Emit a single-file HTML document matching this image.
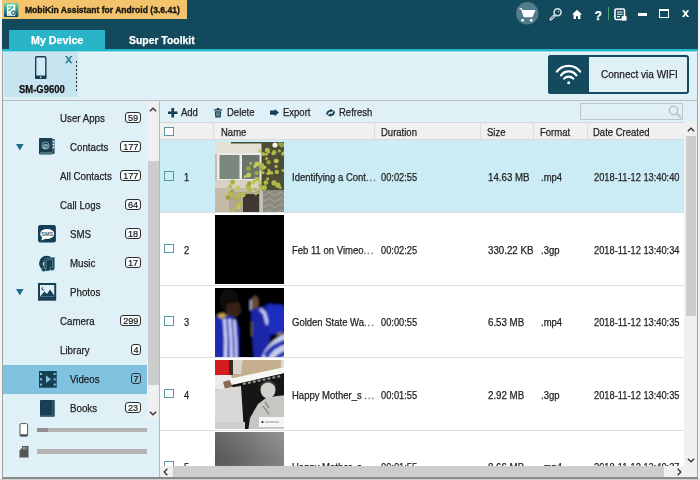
<!DOCTYPE html>
<html><head><meta charset="utf-8">
<style>
*{margin:0;padding:0;box-sizing:border-box}
html,body{width:700px;height:480px;overflow:hidden;background:#f2f2f2;font-family:"Liberation Sans",sans-serif;color:#222;position:relative}
.a{position:absolute}
.tx{position:absolute;white-space:nowrap;line-height:14px;-webkit-text-stroke:.25px currentColor}
svg{position:absolute;overflow:visible}
</style></head><body>
<div class="a" style="left:0;top:0;width:2px;height:480px;background:#f4f4f4"></div>
<div class="a" style="left:2px;top:51px;width:1px;height:428px;background:#a0a0a0"></div>
<div class="a" style="left:697px;top:51px;width:1px;height:428px;background:#a0a0a0"></div>
<div class="a" style="left:698px;top:0;width:2px;height:480px;background:#f4f4f4"></div>
<div class="a" style="left:2px;top:477px;width:696px;height:1.5px;background:#8a8a8a"></div>
<div class="a" style="left:0;top:478.5px;width:700px;height:1.5px;background:#cfcfcf"></div>
<div class="a" style="left:2px;top:0;width:696px;height:49px;background:#12495d"></div>
<div class="a" style="left:2px;top:0;width:185px;height:18.5px;background:#f3c46b"></div>
<svg style="left:4.2px;top:3px" width="14.4" height="14" viewBox="0 0 14.4 14">
  <defs><linearGradient id="ag" x1="0" y1="0" x2="0" y2="1"><stop offset="0" stop-color="#72dcaa"/><stop offset=".55" stop-color="#2a8a8a"/><stop offset="1" stop-color="#0c4560"/></linearGradient></defs>
  <rect x="0" y="0" width="14.4" height="14" rx="1.2" fill="url(#ag)"/>
  <rect x="2.9" y="1.6" width="8.4" height="11.2" fill="#f4fbf8"/>
  <path d="M4 3.2h5.6v1.3L5.6 8.2H4V7l3.6-2.6H4z" fill="#4cc08e"/>
  <circle cx="9.4" cy="9.8" r="2.3" fill="#2d6f78"/><circle cx="9.4" cy="9.8" r="1" fill="#f4fbf8"/>
  <path d="M4 10h2.4M4 11.4h2.4" stroke="#9ad8c0" stroke-width=".7"/>
</svg>
<div class="tx" style="left:25px;top:2.68px;font-size:9.3px;font-weight:bold;color:#141414;transform:scaleX(0.92);transform-origin:0 0;-webkit-text-stroke:.35px #141414;">MobiKin Assistant for Android (3.6.41)</div>
<svg style="left:516px;top:2px" width="23" height="23" viewBox="0 0 23 23">
  <circle cx="11.3" cy="11.3" r="11.2" fill="#527d8b"/>
  <path d="M3.6 6.4l2 .6 2.4 6.8h8.2l2.4-5.2H6.2" fill="none" stroke="#fff" stroke-width="1.3"/>
  <path d="M6.2 9h12.4l-2.4 6.2H8z" fill="#fff"/>
  <circle cx="6.6" cy="18.3" r="1.4" fill="#fff"/><circle cx="15.3" cy="18.3" r="1.4" fill="#fff"/>
</svg>
<svg style="left:546px;top:5px" width="20" height="18" viewBox="0 0 20 18">
  <path d="M8.8 10.3L4.8 14.3" stroke="#d0dde2" stroke-width="2.8" stroke-linecap="round"/>
  <path d="M8.4 10.7L5.2 13.9" stroke="#2f5a6b" stroke-width=".9"/>
  <circle cx="11.6" cy="7.2" r="3.5" fill="#134a5e" stroke="#d6e2e6" stroke-width="1.6"/>
  <path d="M11.6 5.6L13.2 6.2L12.2 7.4z" fill="#b8ccd4"/>
</svg>
<svg style="left:572px;top:9px" width="10" height="10" viewBox="0 0 10 10">
  <path d="M5 .8L0 5.6h1.6V10h2.4V7.2h2V10h2.4V5.6H10z" fill="#fff"/>
</svg>
<div class="tx" style="left:594.5px;top:8.74px;font-size:12px;font-weight:bold;color:#fff;">?</div>
<div class="a" style="left:608px;top:7px;width:1.4px;height:13px;background:#43a876"></div>
<svg style="left:614px;top:8px" width="13" height="13" viewBox="0 0 13 13">
  <rect x="1" y="1" width="9.5" height="10.5" rx="1.2" fill="none" stroke="#fff" stroke-width="1.6"/>
  <path d="M3 4h5.5M3 6.3h5.5M3 8.6h3" stroke="#fff" stroke-width="1.1"/>
  <rect x="7.6" y="8.2" width="5" height="4.4" fill="#fff"/>
</svg>
<div class="a" style="left:638px;top:13px;width:9px;height:3px;background:#fff"></div>
<div class="a" style="left:659px;top:9px;width:10px;height:9px;border:1.2px solid #fff;border-top-width:2.5px"></div>
<svg style="left:682.4px;top:10.3px" width="7.2" height="7.3" viewBox="0 0 7.5 7.2"><path d="M0 0h2.3l1.45 2.1L5.2 0h2.3L4.95 3.6L7.5 7.2H5.2L3.75 5.1L2.3 7.2H0L2.55 3.6z" fill="#fff"/></svg>
<div class="a" style="left:9px;top:30px;width:96px;height:19px;background:#29b4c8"></div>
<div class="tx" style="left:30.7px;top:32.86px;font-size:10.8px;font-weight:bold;color:#fff;transform:scaleX(0.99);transform-origin:0 0;">My Device</div>
<div class="tx" style="left:129.3px;top:32.86px;font-size:10.8px;font-weight:bold;color:#fff;transform:scaleX(0.963);transform-origin:0 0;">Super Toolkit</div>
<div class="a" style="left:2px;top:49px;width:696px;height:2px;background:#1fb9ca"></div>
<div class="a" style="left:2px;top:51px;width:696px;height:1px;background:#8fd8e3"></div>
<div class="a" style="left:3px;top:52px;width:694px;height:48px;background:#e0f0f7"></div>
<div class="a" style="left:3px;top:52px;width:694px;height:1px;background:#f0f9fc"></div>
<div class="a" style="left:4px;top:52px;width:74px;height:45px;background:#c7e4f1"></div>
<svg style="left:34.8px;top:55.7px" width="12" height="23" viewBox="0 0 12 23">
  <rect x=".7" y=".7" width="10.1" height="21.5" rx="1" fill="#d2eaf4" stroke="#173f53" stroke-width="1.4"/>
  <rect x="0" y="19.6" width="11.5" height="3.3" rx=".8" fill="#173f53"/>
  <circle cx="5.75" cy="21.2" r=".8" fill="#fff"/>
</svg>
<svg style="left:65px;top:55.7px" width="7.5" height="7.2" viewBox="0 0 7.5 7.2">
  <path d="M0 0h2.1l1.65 2.3L5.4 0h2.1L4.8 3.6L7.5 7.2H5.4L3.75 4.9L2.1 7.2H0L2.7 3.6z" fill="#2a8990"/>
</svg>
<div class="a" style="left:76px;top:61px;width:1px;height:32px;background:repeating-linear-gradient(to bottom,#333 0 2px,transparent 2px 4px)"></div>
<div class="tx" style="left:19.2px;top:83.17px;font-size:10.2px;font-weight:bold;color:#111;transform:scaleX(0.93);transform-origin:0 0;">SM-G9600</div>
<div class="a" style="left:548px;top:55px;width:141px;height:39px;border:2px solid #134a5e;border-radius:3px;background:#e0f0f7"></div>
<div class="a" style="left:548px;top:55px;width:41px;height:39px;background:#134a5e;border-radius:3px 0 0 3px"></div>
<svg style="left:555px;top:64px" width="27" height="21" viewBox="0 0 27 21">
  <path d="M1.8 7.6A14.9 14.9 0 0 1 25.2 7.6" fill="none" stroke="#fff" stroke-width="2.2" stroke-linecap="round"/>
  <path d="M6 11.3A9.4 9.4 0 0 1 21.4 11.3" fill="none" stroke="#fff" stroke-width="2.2" stroke-linecap="round"/>
  <path d="M9.2 14.6A6.3 6.3 0 0 1 18.2 14.6" fill="none" stroke="#fff" stroke-width="2.2" stroke-linecap="round"/>
  <circle cx="13.7" cy="18.8" r="1.5" fill="#fff"/>
</svg>
<div class="tx" style="left:601.3px;top:66.79px;font-size:11px;font-weight:normal;color:#222;transform:scaleX(0.91);transform-origin:0 0;">Connect via WIFI</div>
<div class="a" style="left:3px;top:100px;width:694px;height:1px;background:#b9bdbf"></div>
<div class="a" style="left:3px;top:101px;width:156px;height:376px;background:#e0f0f7"></div>
<div class="a" style="left:3px;top:365px;width:144px;height:29px;background:#7fc3e1"></div>
<div class="tx" style="left:59.9px;top:111.06px;font-size:10.8px;font-weight:normal;color:#222;transform:scaleX(0.9);transform-origin:0 0;">User Apps</div>
<div class="a" style="left:125px;top:111.9px;width:16px;height:11.6px;border:1px solid #2e2e2e;border-radius:3px;background:#f8fcfe"></div>
<div class="tx" style="left:125px;top:111.40px;width:16px;text-align:center;font-size:9.6px;color:#1a1a1a;-webkit-text-stroke:.2px currentColor;transform:scaleX(.95);transform-origin:50% 0">59</div>
<div class="tx" style="left:70.0px;top:140.06px;font-size:10.8px;font-weight:normal;color:#222;transform:scaleX(0.9);transform-origin:0 0;">Contacts</div>
<div class="a" style="left:119.5px;top:140.9px;width:21.5px;height:11.6px;border:1px solid #2e2e2e;border-radius:3px;background:#f8fcfe"></div>
<div class="tx" style="left:119.5px;top:140.40px;width:21.5px;text-align:center;font-size:9.6px;color:#1a1a1a;-webkit-text-stroke:.2px currentColor;transform:scaleX(.95);transform-origin:50% 0">177</div>
<svg style="left:39px;top:138.0px" width="16" height="17" viewBox="0 0 16 17">
<rect x="0" y="0" width="13.5" height="16.5" rx="1" fill="#173f53"/><rect x="13.5" y="1" width="2" height="15" fill="#173f53"/>
<circle cx="14.5" cy="3.5" r=".9" fill="#e0f0f7"/><circle cx="14.5" cy="6.5" r=".9" fill="#e0f0f7"/><circle cx="14.5" cy="9.5" r=".9" fill="#e0f0f7"/>
<circle cx="6.6" cy="7.6" r="3.6" fill="none" stroke="#9fb8c2" stroke-width=".8"/><text x="6.6" y="9.8" font-size="6.2" font-family="Liberation Sans" font-weight="bold" text-anchor="middle" fill="#d8e6ec">@</text>
<path d="M1 15h12" stroke="#cfe3ea" stroke-width=".6"/></svg>
<svg style="left:16px;top:143.7px" width="8" height="7" viewBox="0 0 8 7"><path d="M0 0h7.6L3.8 6.4z" fill="#1f6d8c"/></svg>
<div class="tx" style="left:59.9px;top:169.06px;font-size:10.8px;font-weight:normal;color:#222;transform:scaleX(0.9);transform-origin:0 0;">All Contacts</div>
<div class="a" style="left:119.5px;top:169.9px;width:21.5px;height:11.6px;border:1px solid #2e2e2e;border-radius:3px;background:#f8fcfe"></div>
<div class="tx" style="left:119.5px;top:169.40px;width:21.5px;text-align:center;font-size:9.6px;color:#1a1a1a;-webkit-text-stroke:.2px currentColor;transform:scaleX(.95);transform-origin:50% 0">177</div>
<div class="tx" style="left:59.9px;top:198.06px;font-size:10.8px;font-weight:normal;color:#222;transform:scaleX(0.9);transform-origin:0 0;">Call Logs</div>
<div class="a" style="left:125px;top:198.9px;width:16px;height:11.6px;border:1px solid #2e2e2e;border-radius:3px;background:#f8fcfe"></div>
<div class="tx" style="left:125px;top:198.40px;width:16px;text-align:center;font-size:9.6px;color:#1a1a1a;-webkit-text-stroke:.2px currentColor;transform:scaleX(.95);transform-origin:50% 0">64</div>
<div class="tx" style="left:70.0px;top:227.06px;font-size:10.8px;font-weight:normal;color:#222;transform:scaleX(0.9);transform-origin:0 0;">SMS</div>
<div class="a" style="left:125px;top:227.9px;width:16px;height:11.6px;border:1px solid #2e2e2e;border-radius:3px;background:#f8fcfe"></div>
<div class="tx" style="left:125px;top:227.40px;width:16px;text-align:center;font-size:9.6px;color:#1a1a1a;-webkit-text-stroke:.2px currentColor;transform:scaleX(.95);transform-origin:50% 0">18</div>
<svg style="left:38.3px;top:225.10000000000002px" width="18" height="17.5" viewBox="0 0 18 17.5">
<rect x="0" y="0" width="17.9" height="17.4" rx="2.2" fill="#173f53"/>
<ellipse cx="9.2" cy="8.9" rx="7" ry="5" fill="#fff"/><path d="M4.4 12L3.2 15.6L8.4 13.4z" fill="#fff"/>
<text x="9.2" y="10.9" font-size="5.4" font-family="Liberation Sans" font-weight="bold" text-anchor="middle" fill="#4a5a62">SMS</text></svg>
<div class="tx" style="left:70.0px;top:256.06px;font-size:10.8px;font-weight:normal;color:#222;transform:scaleX(0.9);transform-origin:0 0;">Music</div>
<div class="a" style="left:125px;top:256.9px;width:16px;height:11.6px;border:1px solid #2e2e2e;border-radius:3px;background:#f8fcfe"></div>
<div class="tx" style="left:125px;top:256.40px;width:16px;text-align:center;font-size:9.6px;color:#1a1a1a;-webkit-text-stroke:.2px currentColor;transform:scaleX(.95);transform-origin:50% 0">17</div>
<svg style="left:38.6px;top:254.60000000000002px" width="16" height="17" viewBox="0 0 16 17">
<circle cx="7.6" cy="8.4" r="7.6" fill="#173f53"/>
<path d="M6.2 4.6L14.6 3.4V13.2M6.2 4.6V14.2" fill="none" stroke="#6f9aa8" stroke-width="2.4"/>
<path d="M6.2 4.6L14.6 3.4V13.2M6.2 4.6V14.2" fill="none" stroke="#173f53" stroke-width="1.1"/>
<ellipse cx="4.8" cy="14.6" rx="2.2" ry="1.8" fill="#173f53" stroke="#6f9aa8" stroke-width=".7"/>
<ellipse cx="13.2" cy="13.6" rx="2.2" ry="1.8" fill="#173f53" stroke="#6f9aa8" stroke-width=".7"/>
<path d="M4.6 7.2Q3.6 9 4.8 10.6" fill="none" stroke="#e8f4f8" stroke-width="1"/>
</svg>
<div class="tx" style="left:70.0px;top:285.06px;font-size:10.8px;font-weight:normal;color:#222;transform:scaleX(0.9);transform-origin:0 0;">Photos</div>
<svg style="left:38px;top:282.90000000000003px" width="18.5" height="18" viewBox="0 0 18.5 18">
<rect x="0" y="0" width="18.2" height="17.7" fill="#173f53"/><rect x="2" y="2" width="14.2" height="11.5" fill="#e0f0f7"/>
<path d="M2 13.5L6.5 8.5L9 11L12 6.5L16.2 12.5V13.5z" fill="#173f53"/>
<path d="M5.3 3.8a1.8 1.8 0 1 0 1.6 2.7a1.5 1.5 0 1 1 -1.6 -2.7z" fill="#173f53"/></svg>
<svg style="left:16px;top:288.7px" width="8" height="7" viewBox="0 0 8 7"><path d="M0 0h7.6L3.8 6.4z" fill="#1f6d8c"/></svg>
<div class="tx" style="left:59.9px;top:314.06px;font-size:10.8px;font-weight:normal;color:#222;transform:scaleX(0.9);transform-origin:0 0;">Camera</div>
<div class="a" style="left:119.5px;top:314.9px;width:21.5px;height:11.6px;border:1px solid #2e2e2e;border-radius:3px;background:#f8fcfe"></div>
<div class="tx" style="left:119.5px;top:314.40px;width:21.5px;text-align:center;font-size:9.6px;color:#1a1a1a;-webkit-text-stroke:.2px currentColor;transform:scaleX(.95);transform-origin:50% 0">299</div>
<div class="tx" style="left:59.9px;top:343.06px;font-size:10.8px;font-weight:normal;color:#222;transform:scaleX(0.9);transform-origin:0 0;">Library</div>
<div class="a" style="left:131px;top:343.9px;width:10px;height:11.6px;border:1px solid #2e2e2e;border-radius:3px;background:#f8fcfe"></div>
<div class="tx" style="left:131px;top:343.40px;width:10px;text-align:center;font-size:9.6px;color:#1a1a1a;-webkit-text-stroke:.2px currentColor;transform:scaleX(.95);transform-origin:50% 0">4</div>
<div class="tx" style="left:70.0px;top:372.06px;font-size:10.8px;font-weight:normal;color:#222;transform:scaleX(0.9);transform-origin:0 0;">Videos</div>
<div class="a" style="left:131px;top:372.9px;width:10px;height:11.6px;border:1px solid #2e2e2e;border-radius:3px;background:transparent"></div>
<div class="tx" style="left:131px;top:372.40px;width:10px;text-align:center;font-size:9.6px;color:#1a1a1a;-webkit-text-stroke:.2px currentColor;transform:scaleX(.95);transform-origin:50% 0">7</div>
<svg style="left:38.5px;top:371.0px" width="18" height="17" viewBox="0 0 18 17">
<rect x="0" y="0" width="17.7" height="16.7" fill="#173f53"/>
<rect x="1" y="2" width="2" height="2" fill="#80c3e0"/><rect x="1" y="7.3" width="2" height="2" fill="#80c3e0"/><rect x="1" y="12.6" width="2" height="2" fill="#80c3e0"/>
<rect x="14.7" y="2" width="2" height="2" fill="#80c3e0"/><rect x="14.7" y="7.3" width="2" height="2" fill="#80c3e0"/><rect x="14.7" y="12.6" width="2" height="2" fill="#80c3e0"/>
<path d="M7 4.5L12 8.3L7 12z" fill="#80c3e0"/></svg>
<div class="tx" style="left:70.0px;top:401.06px;font-size:10.8px;font-weight:normal;color:#222;transform:scaleX(0.9);transform-origin:0 0;">Books</div>
<div class="a" style="left:125px;top:401.9px;width:16px;height:11.6px;border:1px solid #2e2e2e;border-radius:3px;background:#f8fcfe"></div>
<div class="tx" style="left:125px;top:401.40px;width:16px;text-align:center;font-size:9.6px;color:#1a1a1a;-webkit-text-stroke:.2px currentColor;transform:scaleX(.95);transform-origin:50% 0">23</div>
<svg style="left:39.7px;top:399.7px" width="15" height="17" viewBox="0 0 15 17">
<rect x="0" y="0" width="14.7" height="16.7" rx=".8" fill="#173f53"/><path d="M12.8 .5v15.5" stroke="#5f8a9a" stroke-width=".6"/><path d="M.5 15.8h12.3" stroke="#5f8a9a" stroke-width=".6"/></svg>
<div class="a" style="left:147px;top:101px;width:12px;height:318px;background:#f0f0f0"></div>
<div class="a" style="left:147.5px;top:161px;width:11px;height:224px;background:#cdcdcd"></div>
<svg style="left:149px;top:107px" width="8" height="5" viewBox="0 0 8 5"><path d="M.8 4.3L4 1.2L7.2 4.3" fill="none" stroke="#333" stroke-width="1.3"/></svg>
<svg style="left:149px;top:411px" width="8" height="5" viewBox="0 0 8 5"><path d="M.8 .7L4 3.8L7.2 .7" fill="none" stroke="#333" stroke-width="1.3"/></svg>
<svg style="left:19px;top:422.5px" width="10" height="14" viewBox="0 0 10 14"><rect x="1" y=".6" width="7.6" height="12.6" rx="1.2" fill="#fff" stroke="#555" stroke-width="1"/><rect x="1" y="11.2" width="7.6" height="2" fill="#555"/></svg>
<div class="a" style="left:37px;top:428px;width:110px;height:4px;background:#b3b3b3"></div>
<div class="a" style="left:37px;top:428px;width:11px;height:4px;background:#8f8f8f"></div>
<svg style="left:19px;top:446px" width="10" height="12" viewBox="0 0 10 12"><path d="M3 0h6.5v11.5H.5V4.5L3 2z" fill="#555"/><path d="M4 1h.6v2.5H4zM5.5 1h.6v2.5h-.6zM7 1h.6v2.5H7z" fill="#ddd"/></svg>
<div class="a" style="left:37px;top:449px;width:110px;height:5px;background:#b3b3b3"></div>
<div class="a" style="left:159px;top:101px;width:1px;height:376px;background:#b8b8b8"></div>
<div class="a" style="left:160px;top:101px;width:537px;height:21px;background:#e0f0f7"></div>
<svg style="left:168px;top:108px" width="9.5" height="9.5" viewBox="0 0 9.5 9.5"><path d="M3.4 0h2.7v3.4h3.4v2.7H6.1v3.4H3.4V6.1H0V3.4h3.4z" fill="#173f53"/></svg>
<div class="tx" style="left:181.4px;top:105.26px;font-size:10.8px;font-weight:normal;color:#222;transform:scaleX(0.88);transform-origin:0 0;">Add</div>
<svg style="left:214px;top:108px" width="8" height="9.5" viewBox="0 0 8 9.5"><path d="M0 1.2h8v1.4H0zM2.8 0h2.4v1.2H2.8zM.8 3.2h6.4l-.5 6.3H1.3z" fill="#173f53"/><path d="M2.8 4.3v4M4 4.3v4M5.2 4.3v4" stroke="#e0f0f7" stroke-width=".5"/></svg>
<div class="tx" style="left:227px;top:105.26px;font-size:10.8px;font-weight:normal;color:#222;transform:scaleX(0.88);transform-origin:0 0;">Delete</div>
<svg style="left:269.7px;top:109.3px" width="9" height="7.2" viewBox="0 0 9 7.2"><path d="M0 1.4h4.6V0L9 3.6L4.6 7.2V5.8H0z" fill="#173f53"/></svg>
<div class="tx" style="left:283px;top:105.26px;font-size:10.8px;font-weight:normal;color:#222;transform:scaleX(0.88);transform-origin:0 0;">Export</div>
<svg style="left:326.3px;top:109.3px" width="9.2" height="7.8" viewBox="0 0 9.2 7.8"><path d="M1.2 5.6Q1 2 5 1.6" fill="none" stroke="#173f53" stroke-width="1.9"/><path d="M4.4 0L7.6 1.6L4.6 3.6z" fill="#173f53"/><path d="M8 2.2Q8.2 5.8 4.2 6.2" fill="none" stroke="#173f53" stroke-width="1.9"/><path d="M4.8 7.8L1.6 6.2L4.6 4.2z" fill="#173f53"/></svg>
<div class="tx" style="left:339.3px;top:105.26px;font-size:10.8px;font-weight:normal;color:#222;transform:scaleX(0.88);transform-origin:0 0;">Refresh</div>
<div class="a" style="left:580px;top:103px;width:103px;height:16.5px;border:1.5px solid #bcc6cb;background:#e0f0f7"></div>
<svg style="left:668px;top:104.5px" width="14" height="13" viewBox="0 0 14 13"><circle cx="5.5" cy="5.5" r="4.2" fill="none" stroke="#c3c3c3" stroke-width="1.6"/><path d="M8.6 8.6L12.5 12.2" stroke="#c3c3c3" stroke-width="2.2" stroke-linecap="round"/></svg>
<div class="a" style="left:160px;top:122px;width:524px;height:344px;background:#fff;overflow:hidden"><div class="a" style="left:0;top:0;width:524px;height:18px;background:#f0f0f0;border-bottom:1px solid #dadada;border-top:1px solid #d4d8da"></div>
<div class="a" style="left:53px;top:0;width:1px;height:18px;background:#dcdcdc"></div>
<div class="a" style="left:214px;top:0;width:1px;height:18px;background:#dcdcdc"></div>
<div class="a" style="left:320px;top:0;width:1px;height:18px;background:#dcdcdc"></div>
<div class="a" style="left:373px;top:0;width:1px;height:18px;background:#dcdcdc"></div>
<div class="a" style="left:427px;top:0;width:1px;height:18px;background:#dcdcdc"></div>
<div class="a" style="left:4.300000000000011px;top:4.700000000000003px;width:9.8px;height:9.6px;border:1.3px solid #5b96a6;background:#fff"></div>
<div class="tx" style="left:60.5px;top:2.86px;font-size:10.8px;font-weight:normal;color:#222;transform:scaleX(0.88);transform-origin:0 0;">Name</div>
<div class="tx" style="left:220.5px;top:2.86px;font-size:10.8px;font-weight:normal;color:#222;transform:scaleX(0.88);transform-origin:0 0;">Duration</div>
<div class="tx" style="left:327px;top:2.86px;font-size:10.8px;font-weight:normal;color:#222;transform:scaleX(0.88);transform-origin:0 0;">Size</div>
<div class="tx" style="left:380px;top:2.86px;font-size:10.8px;font-weight:normal;color:#222;transform:scaleX(0.88);transform-origin:0 0;">Format</div>
<div class="tx" style="left:433px;top:2.86px;font-size:10.8px;font-weight:normal;color:#222;transform:scaleX(0.88);transform-origin:0 0;">Date Created</div>
<div class="a" style="left:0;top:18px;width:524px;height:73px;background:#cbebf5;border-bottom:1px solid #dedede"></div>
<div class="a" style="left:55px;top:20px;width:69px;height:69.5px;overflow:hidden"><svg style="left:0;top:0" width="70" height="70" viewBox="0 0 70 70"><defs><filter id="b1" x="-10%" y="-10%" width="120%" height="120%"><feGaussianBlur stdDeviation=".55"/></filter></defs>
<g filter="url(#b1)">
<rect x="-2" y="-2" width="74" height="74" fill="#c8bca8"/>
<rect x="-2" y="-2" width="50" height="14" fill="#e4e0d4"/>
<rect x="16" y="-2" width="56" height="3.5" fill="#44482e"/>
<rect x="2" y="11" width="45" height="28" fill="#eeece6"/>
<rect x="4.5" y="13" width="20" height="24" fill="#7a887e"/>
<rect x="27" y="13" width="17.5" height="24" fill="#68746c"/>
<rect x="-2" y="38" width="50" height="8" fill="#d9d1c4"/>
<rect x="-2" y="46" width="50" height="26" fill="#c6baa6"/>
<rect x="14" y="50" width="32" height="22" fill="#b2a692"/>
<rect x="28" y="52" width="16" height="20" fill="#3e3832"/>
<rect x="46.5" y="1" width="25.5" height="48" fill="#4e4e34"/>
<rect x="48" y="48" width="24" height="24" fill="#8a8a80"/>
<path d="M48 54l6 -4l6 4l6 -4l6 4M48 60l6 -4l6 4l6 -4l6 4M48 66l6 -4l6 4l6 -4l6 4M48 72l6 -4l6 4l6 -4l6 4" fill="none" stroke="#b4b4aa" stroke-width=".7"/>
<rect x="45" y="46" width="2.5" height="26" fill="#c4c2b8"/>
<circle cx="60" cy="3" r="2.6" fill="#f2f2ee"/>
<circle cx="40.8" cy="52.0" r="1.4" fill="#b4bc4c"/>
<circle cx="44.8" cy="43.5" r="1.3" fill="#98a03a"/>
<circle cx="40.3" cy="47.0" r="1.4" fill="#b4bc4c"/>
<circle cx="19.3" cy="57.0" r="1.6" fill="#a8b040"/>
<circle cx="35.2" cy="47.8" r="1.7" fill="#a8b040"/>
<circle cx="19.3" cy="53.6" r="1.4" fill="#b4bc4c"/>
<circle cx="41.3" cy="21.8" r="2.0" fill="#c4c860"/>
<circle cx="48.1" cy="30.6" r="1.6" fill="#a8b040"/>
<circle cx="54.7" cy="30.5" r="2.0" fill="#c4c860"/>
<circle cx="51.3" cy="40.0" r="1.5" fill="#98a03a"/>
<circle cx="17.7" cy="67.7" r="1.8" fill="#b4bc4c"/>
<circle cx="44.9" cy="8.9" r="1.7" fill="#c4c860"/>
<circle cx="42.1" cy="22.1" r="2.4" fill="#c4c860"/>
<circle cx="41.4" cy="31.1" r="2.2" fill="#98a03a"/>
<circle cx="25.0" cy="52.7" r="1.3" fill="#98a03a"/>
<circle cx="30.2" cy="34.7" r="1.6" fill="#c4c860"/>
<circle cx="24.8" cy="62.2" r="2.4" fill="#b4bc4c"/>
<circle cx="22.0" cy="55.8" r="1.5" fill="#98a03a"/>
<circle cx="61.6" cy="18.3" r="1.8" fill="#98a03a"/>
<circle cx="70.3" cy="8.6" r="1.6" fill="#a8b040"/>
<circle cx="20.8" cy="56.8" r="1.7" fill="#a8b040"/>
<circle cx="33.6" cy="44.4" r="2.5" fill="#b4bc4c"/>
<circle cx="53.6" cy="20.3" r="2.2" fill="#98a03a"/>
<circle cx="32.4" cy="43.8" r="1.8" fill="#a8b040"/>
<circle cx="22.6" cy="62.6" r="1.7" fill="#b4bc4c"/>
<circle cx="15.4" cy="51.8" r="2.5" fill="#b4bc4c"/>
<circle cx="23.4" cy="65.3" r="2.1" fill="#c4c860"/>
<circle cx="45.9" cy="26.5" r="1.9" fill="#98a03a"/>
<circle cx="41.5" cy="37.3" r="2.3" fill="#c4c860"/>
<circle cx="39.9" cy="24.3" r="1.6" fill="#c4c860"/>
<circle cx="24.0" cy="52.7" r="2.0" fill="#b4bc4c"/>
<circle cx="53.7" cy="27.9" r="1.5" fill="#a8b040"/>
<circle cx="46.8" cy="23.0" r="1.6" fill="#a8b040"/>
<circle cx="64.7" cy="1.7" r="1.6" fill="#98a03a"/>
<circle cx="38.1" cy="41.0" r="1.7" fill="#c4c860"/>
<circle cx="23.0" cy="45.9" r="2.4" fill="#c4c860"/>
<circle cx="64.4" cy="8.9" r="1.6" fill="#a8b040"/>
<circle cx="15.4" cy="44.3" r="2.1" fill="#b4bc4c"/>
<circle cx="35.7" cy="21.5" r="1.4" fill="#b4bc4c"/>
<circle cx="48.2" cy="46.0" r="1.7" fill="#98a03a"/>
<circle cx="42.0" cy="30.8" r="1.5" fill="#a8b040"/>
<circle cx="12.8" cy="55.5" r="2.2" fill="#98a03a"/>
<circle cx="47.0" cy="30.7" r="1.5" fill="#b4bc4c"/>
<circle cx="59.1" cy="10.4" r="2.3" fill="#a8b040"/>
<circle cx="49.6" cy="25.2" r="1.6" fill="#c4c860"/>
<circle cx="17.2" cy="49.1" r="1.7" fill="#98a03a"/>
<circle cx="51.6" cy="16.5" r="1.5" fill="#a8b040"/>
<circle cx="52.7" cy="31.6" r="1.5" fill="#b4bc4c"/>
<circle cx="60.6" cy="19.0" r="2.1" fill="#b4bc4c"/>
<circle cx="43.0" cy="37.2" r="2.0" fill="#b4bc4c"/>
<circle cx="68.2" cy="10.8" r="1.4" fill="#b4bc4c"/>
<circle cx="33.5" cy="26.4" r="2.5" fill="#98a03a"/>
<circle cx="44.4" cy="40.6" r="1.6" fill="#c4c860"/>
<circle cx="33.7" cy="33.0" r="2.5" fill="#c4c860"/>
<circle cx="69.7" cy="3.3" r="1.9" fill="#98a03a"/>
<circle cx="21.8" cy="55.8" r="1.6" fill="#b4bc4c"/>
<circle cx="27.9" cy="53.1" r="2.3" fill="#c4c860"/>
<circle cx="39.0" cy="39.4" r="1.6" fill="#b4bc4c"/>
<circle cx="17.6" cy="40.0" r="2.4" fill="#a8b040"/>
<circle cx="61.8" cy="19.3" r="1.8" fill="#c4c860"/>
<circle cx="34.3" cy="41.3" r="2.0" fill="#98a03a"/>
<circle cx="48.2" cy="26.2" r="1.7" fill="#b4bc4c"/>
<circle cx="28.3" cy="52.4" r="2.4" fill="#b4bc4c"/>
<circle cx="43.6" cy="49.5" r="1.7" fill="#a8b040"/>
<circle cx="66.8" cy="3.1" r="2.5" fill="#98a03a"/>
<circle cx="33.7" cy="48.0" r="2.2" fill="#b4bc4c"/>
<circle cx="52.7" cy="36.8" r="1.6" fill="#b0b84a"/>
<circle cx="67.5" cy="12.4" r="1.4" fill="#b0b84a"/>
<circle cx="48.1" cy="12.0" r="2.1" fill="#b0b84a"/>
<circle cx="51.3" cy="12.2" r="1.5" fill="#b0b84a"/>
<circle cx="46.3" cy="45.7" r="1.9" fill="#b0b84a"/>
<circle cx="68.0" cy="28.6" r="1.5" fill="#b0b84a"/>
<circle cx="63.0" cy="43.2" r="2.6" fill="#b0b84a"/>
<circle cx="52.3" cy="8.3" r="2.5" fill="#b0b84a"/>
<circle cx="61.1" cy="24.4" r="1.6" fill="#b0b84a"/>
<circle cx="56.7" cy="30.9" r="1.7" fill="#b0b84a"/>
<circle cx="65.3" cy="45.7" r="1.4" fill="#b0b84a"/>
<circle cx="46.4" cy="23.3" r="2.6" fill="#b0b84a"/>
<circle cx="58.3" cy="11.3" r="1.9" fill="#b0b84a"/>
<circle cx="61.8" cy="29.9" r="2.2" fill="#b0b84a"/>
<circle cx="59.1" cy="40.9" r="2.6" fill="#b0b84a"/>
<circle cx="53.4" cy="9.9" r="1.7" fill="#b0b84a"/>
<circle cx="50.8" cy="40.6" r="2.3" fill="#b0b84a"/>
<circle cx="49.4" cy="45.5" r="2.6" fill="#b0b84a"/>
</g></svg></div>
<div class="a" style="left:4.300000000000011px;top:49.1px;width:9.8px;height:9.8px;border:1.3px solid #5b96a6"></div>
<div class="tx" style="left:23.5px;top:48.26px;font-size:10.8px;font-weight:normal;color:#222;transform:scaleX(0.86);transform-origin:0 0;">1</div>
<div class="tx" style="left:132px;top:48.26px;font-size:10.8px;font-weight:normal;color:#222;transform:scaleX(0.88);transform-origin:0 0;">Identifying a Cont<span style="letter-spacing:1.1px;color:#666">...</span></div>
<div class="tx" style="left:221px;top:48.26px;font-size:10.8px;font-weight:normal;color:#222;transform:scaleX(0.86);transform-origin:0 0;">00:02:55</div>
<div class="tx" style="left:328px;top:48.26px;font-size:10.8px;font-weight:normal;color:#222;transform:scaleX(0.9);transform-origin:0 0;">14.63 MB</div>
<div class="tx" style="left:380.70000000000005px;top:48.26px;font-size:10.8px;font-weight:normal;color:#222;transform:scaleX(0.88);transform-origin:0 0;">.mp4</div>
<div class="tx" style="left:433.6px;top:48.26px;font-size:10.8px;font-weight:normal;color:#222;transform:scaleX(0.86);transform-origin:0 0;">2018-11-12 13:40:40</div>
<div class="a" style="left:0;top:91px;width:524px;height:73px;background:#fff;border-bottom:1px solid #dedede"></div>
<div class="a" style="left:55px;top:92.5px;width:69px;height:69.5px;overflow:hidden"><div class="a" style="left:0;top:0;width:70px;height:70px;background:#000"></div></div>
<div class="a" style="left:4.300000000000011px;top:121.6px;width:9.8px;height:9.8px;border:1.3px solid #5b96a6"></div>
<div class="tx" style="left:23.5px;top:120.76px;font-size:10.8px;font-weight:normal;color:#222;transform:scaleX(0.86);transform-origin:0 0;">2</div>
<div class="tx" style="left:132px;top:120.76px;font-size:10.8px;font-weight:normal;color:#222;transform:scaleX(0.88);transform-origin:0 0;">Feb 11 on Vimeo<span style="letter-spacing:1.1px;color:#666">...</span></div>
<div class="tx" style="left:221px;top:120.76px;font-size:10.8px;font-weight:normal;color:#222;transform:scaleX(0.86);transform-origin:0 0;">00:02:25</div>
<div class="tx" style="left:328px;top:120.76px;font-size:10.8px;font-weight:normal;color:#222;transform:scaleX(0.9);transform-origin:0 0;">330.22 KB</div>
<div class="tx" style="left:380.70000000000005px;top:120.76px;font-size:10.8px;font-weight:normal;color:#222;transform:scaleX(0.88);transform-origin:0 0;">.3gp</div>
<div class="tx" style="left:433.6px;top:120.76px;font-size:10.8px;font-weight:normal;color:#222;transform:scaleX(0.86);transform-origin:0 0;">2018-11-12 13:40:34</div>
<div class="a" style="left:0;top:164px;width:524px;height:72px;background:#fff;border-bottom:1px solid #dedede"></div>
<div class="a" style="left:55px;top:165.5px;width:69px;height:69.5px;overflow:hidden"><svg style="left:0;top:0" width="70" height="70" viewBox="0 0 70 70"><defs><filter id="b3" x="-10%" y="-10%" width="120%" height="120%"><feGaussianBlur stdDeviation=".9"/></filter></defs>
<g filter="url(#b3)">
<rect x="-2" y="-2" width="74" height="74" fill="#040406"/>
<ellipse cx="14" cy="12" rx="9" ry="11" fill="#110c0a"/>
<path d="M12 16L24 14L26 24L20 30L10 28z" fill="#3a2418"/>
<path d="M-2 30L4 26L12 27L20 30L24 40L24 72H-2z" fill="#1c2cb4"/>
<path d="M2 27l6-2 4 3-6 3z" fill="#c8a840"/>
<path d="M8 31q2 20 1 41h3q1-21-1-41zM13 31q2 20 2 41h3q0-21-2-41zM18 32q2 20 2 40h2.5q0-20-2-40z" fill="#d0d6f4"/>
<ellipse cx="40" cy="15" rx="3.6" ry="7" fill="#6a4a32"/>
<path d="M35 12l2 0 0 10-2 0z" fill="#9aa0c0"/>
<path d="M36 22L50 18L58 24L56 46L50 72H39L37 46z" fill="#1c28a8"/>
<path d="M46 20l5 4 3 12-3 1-3-11-4-4z" fill="#c4caf0"/>
<path d="M52 16L68 17L72 24V46L54 46z" fill="#1e2ec0"/>
<path d="M36 34h2v14h-2z" fill="#5a5020"/>
<path d="M46 72Q52 52 72 45V72z" fill="#c8d0f0"/>
<path d="M49 66Q56 55 72 51V56Q58 59 52 72zM58 72Q62 65 72 62V67Q66 69 63 72z" fill="#2232b0"/>
<ellipse cx="65" cy="46" rx="3" ry="2" fill="#8a6a50"/>
</g></svg></div>
<div class="a" style="left:4.300000000000011px;top:194.1px;width:9.8px;height:9.8px;border:1.3px solid #5b96a6"></div>
<div class="tx" style="left:23.5px;top:193.26px;font-size:10.8px;font-weight:normal;color:#222;transform:scaleX(0.86);transform-origin:0 0;">3</div>
<div class="tx" style="left:132px;top:193.26px;font-size:10.8px;font-weight:normal;color:#222;transform:scaleX(0.88);transform-origin:0 0;">Golden State Wa<span style="letter-spacing:1.1px;color:#666">...</span></div>
<div class="tx" style="left:221px;top:193.26px;font-size:10.8px;font-weight:normal;color:#222;transform:scaleX(0.86);transform-origin:0 0;">00:00:55</div>
<div class="tx" style="left:328px;top:193.26px;font-size:10.8px;font-weight:normal;color:#222;transform:scaleX(0.9);transform-origin:0 0;">6.53 MB</div>
<div class="tx" style="left:380.70000000000005px;top:193.26px;font-size:10.8px;font-weight:normal;color:#222;transform:scaleX(0.88);transform-origin:0 0;">.mp4</div>
<div class="tx" style="left:433.6px;top:193.26px;font-size:10.8px;font-weight:normal;color:#222;transform:scaleX(0.86);transform-origin:0 0;">2018-11-12 13:40:35</div>
<div class="a" style="left:0;top:236px;width:524px;height:73px;background:#fff;border-bottom:1px solid #dedede"></div>
<div class="a" style="left:55px;top:237.5px;width:69px;height:69.5px;overflow:hidden"><svg style="left:0;top:0" width="70" height="70" viewBox="0 0 70 70"><defs><filter id="b4" x="-10%" y="-10%" width="120%" height="120%"><feGaussianBlur stdDeviation=".7"/></filter></defs>
<g filter="url(#b4)">
<rect x="-2" y="-2" width="74" height="74" fill="#c4ae8e"/>
<rect x="66" y="-2" width="6" height="12" fill="#d8dce0"/>
<path d="M-2 -2H14Q16 8 14 17H-2z" fill="#d41e22"/>
<path d="M14 -2h4v17h-4z" fill="#3a2a22"/>
<path d="M18 -2h10l-2 16h-8z" fill="#d8d4cc"/>
<path d="M-2 15H16L20 29H-2z" fill="#eeeaea"/>
<path d="M8 22l9-3 3 7-10 3z" fill="#8a6a52"/>
<path d="M14 19L70 7V13L17 25z" fill="#f6f6f4"/>
<path d="M17 25L70 13V72H30z" fill="#161616"/>
<path d="M28 24L66 16" stroke="#9a9a9a" stroke-width="2" stroke-dasharray="3 2"/>
<ellipse cx="53" cy="30" rx="7.5" ry="8.5" fill="#d2d0cc"/><path d="M45 26q8-9 16 0" stroke="#3a3a3a" stroke-width="2" fill="none"/>
<path d="M33 72L35 58L43 44L51 38L62 36L72 35V72z" fill="#c8c6c2"/>
<path d="M50 42l4 6M48 46l6 8" stroke="#7a7a7a" stroke-width="1.2"/>
<path d="M-2 30L26 26L29 72H-2z" fill="#dad8d6"/>
<path d="M-2 62H30V72H-2z" fill="#d0cecc"/>
<rect x="44" y="57" width="28" height="10" fill="#f6f6f6"/>
<circle cx="47.5" cy="62" r="1.1" fill="#3a2030"/>
<path d="M50 62h14" stroke="#aaa" stroke-width="1.2"/>
</g></svg></div>
<div class="a" style="left:4.300000000000011px;top:266.6px;width:9.8px;height:9.8px;border:1.3px solid #5b96a6"></div>
<div class="tx" style="left:23.5px;top:265.76px;font-size:10.8px;font-weight:normal;color:#222;transform:scaleX(0.86);transform-origin:0 0;">4</div>
<div class="tx" style="left:132px;top:265.76px;font-size:10.8px;font-weight:normal;color:#222;transform:scaleX(0.88);transform-origin:0 0;">Happy Mother_s <span style="letter-spacing:1.1px;color:#666">...</span></div>
<div class="tx" style="left:221px;top:265.76px;font-size:10.8px;font-weight:normal;color:#222;transform:scaleX(0.86);transform-origin:0 0;">00:01:55</div>
<div class="tx" style="left:328px;top:265.76px;font-size:10.8px;font-weight:normal;color:#222;transform:scaleX(0.9);transform-origin:0 0;">2.92 MB</div>
<div class="tx" style="left:380.70000000000005px;top:265.76px;font-size:10.8px;font-weight:normal;color:#222;transform:scaleX(0.88);transform-origin:0 0;">.3gp</div>
<div class="tx" style="left:433.6px;top:265.76px;font-size:10.8px;font-weight:normal;color:#222;transform:scaleX(0.86);transform-origin:0 0;">2018-11-12 13:40:35</div>
<div class="a" style="left:0;top:309px;width:524px;height:72px;background:#fff;border-bottom:1px solid #dedede"></div>
<div class="a" style="left:55px;top:310px;width:69px;height:69.5px;overflow:hidden"><div class="a" style="left:0;top:0;width:70px;height:70px;background:linear-gradient(90deg,#5c5c5c 0,#6a6a6a 35%,#7c7c7c 70%,#8a8a8a 100%)"></div>
<div class="a" style="left:0;top:0;width:70px;height:70px;background:linear-gradient(180deg,rgba(255,255,255,.08) 0,rgba(0,0,0,.05) 40%,rgba(255,255,255,.06) 70%,rgba(0,0,0,.04) 100%)"></div></div>
<div class="a" style="left:4.300000000000011px;top:339.1px;width:9.8px;height:9.8px;border:1.3px solid #5b96a6"></div>
<div class="tx" style="left:23.5px;top:338.26px;font-size:10.8px;font-weight:normal;color:#222;transform:scaleX(0.86);transform-origin:0 0;">5</div>
<div class="tx" style="left:132px;top:338.26px;font-size:10.8px;font-weight:normal;color:#222;transform:scaleX(0.88);transform-origin:0 0;">Happy Mother_s <span style="letter-spacing:1.1px;color:#666">...</span></div>
<div class="tx" style="left:221px;top:338.26px;font-size:10.8px;font-weight:normal;color:#222;transform:scaleX(0.86);transform-origin:0 0;">00:01:55</div>
<div class="tx" style="left:328px;top:338.26px;font-size:10.8px;font-weight:normal;color:#222;transform:scaleX(0.9);transform-origin:0 0;">8.66 MB</div>
<div class="tx" style="left:380.70000000000005px;top:338.26px;font-size:10.8px;font-weight:normal;color:#222;transform:scaleX(0.88);transform-origin:0 0;">.mp4</div>
<div class="tx" style="left:433.6px;top:338.26px;font-size:10.8px;font-weight:normal;color:#222;transform:scaleX(0.86);transform-origin:0 0;">2018-11-12 13:40:37</div></div>
<div class="a" style="left:684px;top:122px;width:13px;height:344px;background:#f0f0f0"></div>
<div class="a" style="left:685.5px;top:136px;width:10.5px;height:180px;background:#cdcdcd"></div>
<div class="a" style="left:160px;top:466px;width:537px;height:11px;background:#f0f0f0"></div>
<svg style="left:687px;top:127px" width="8" height="5" viewBox="0 0 8 5"><path d="M.8 4.3L4 1.2L7.2 4.3" fill="none" stroke="#333" stroke-width="1.3"/></svg>
<svg style="left:687px;top:458px" width="8" height="5" viewBox="0 0 8 5"><path d="M.8 .7L4 3.8L7.2 .7" fill="none" stroke="#333" stroke-width="1.3"/></svg>
<div class="a" style="left:173px;top:466px;width:491px;height:10.5px;background:#cdcdcd"></div>
<svg style="left:163px;top:468px" width="5" height="8" viewBox="0 0 5 8"><path d="M4.3 .8L1.2 4L4.3 7.2" fill="none" stroke="#333" stroke-width="1.3"/></svg>
<svg style="left:677px;top:468px" width="5" height="8" viewBox="0 0 5 8"><path d="M.7 .8L3.8 4L.7 7.2" fill="none" stroke="#333" stroke-width="1.3"/></svg>
</body></html>
